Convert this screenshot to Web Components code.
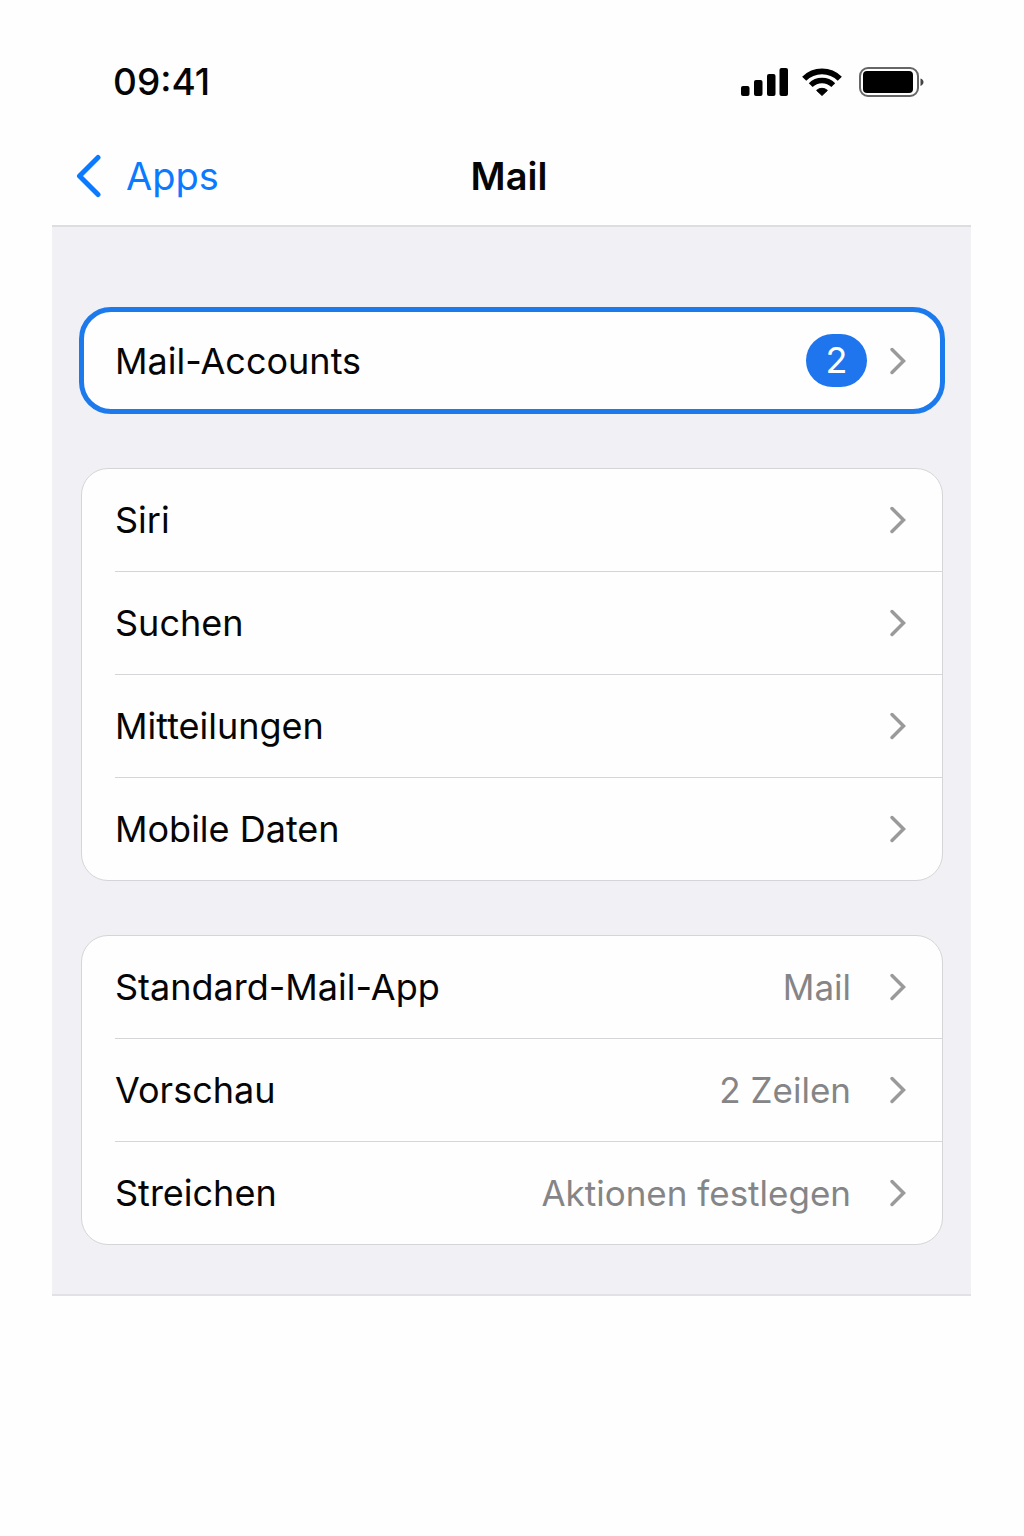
<!DOCTYPE html>
<html lang="de">
<head>
<meta charset="utf-8">
<meta name="viewport" content="width=device-width, initial-scale=1">
<title>Mail</title>
<style>
    body {
        margin: 0;
        background: #fefefe;
        color: #050505;
        font-family: Inter, "Liberation Sans", sans-serif;
    }
</style>
</head>
<body>
<settings-screen>
    <status-bar slot="status" time="09:41"></status-bar>
    <nav-header slot="header" back="Apps">Mail</nav-header>
    <settings-group highlighted>
        <settings-row badge="2">Mail-Accounts</settings-row>
    </settings-group>
    <settings-group>
        <settings-row>Siri</settings-row>
        <settings-row>Suchen</settings-row>
        <settings-row>Mitteilungen</settings-row>
        <settings-row>Mobile Daten</settings-row>
    </settings-group>
    <settings-group>
        <settings-row value="Mail">Standard-Mail-App</settings-row>
        <settings-row value="2 Zeilen">Vorschau</settings-row>
        <settings-row value="Aktionen festlegen">Streichen</settings-row>
    </settings-group>
</settings-screen>

<script>
class SettingsScreen extends HTMLElement {
    constructor() {
        super();
        this.attachShadow({mode: 'open'});
        this.shadowRoot.innerHTML = `
            <style>
                :host { display: block; padding: 52px 53px 0 52px; }
                main {
                    display: flex; flex-direction: column; gap: 54px;
                    padding: 82px 28px 49px 29px;
                    background: #f1f0f5;
                    border-top: 2px solid #dddde1; border-bottom: 2px solid #e2e2e6;
                }
            </style>
            <slot name="status"></slot>
            <slot name="header"></slot>
            <main><slot></slot></main>
        `;
    }
}

class StatusBar extends HTMLElement {
    connectedCallback() {
        this.attachShadow({mode: 'open'});
        this.shadowRoot.innerHTML = `
            <style>
                :host {
                    display: flex; align-items: center; justify-content: space-between;
                    height: 60px; padding: 0 47px 0 61px;
                }
                time { font-size: 37px; font-weight: 500; line-height: 48px; }
                .icons { display: flex; align-items: center; gap: 14px; }
                svg { display: block; }
            </style>
            <time>${this.getAttribute('time')}</time>
            <div class="icons">
                <svg width="47" height="30" viewBox="0 0 47 30" aria-hidden="true">
                    <rect x="0" y="19" width="8.500" height="10" rx="2"/>
                    <rect x="13" y="13" width="8.500" height="16" rx="2"/>
                    <rect x="26" y="7" width="8.500" height="22" rx="2"/>
                    <rect x="38.500" y="1" width="8.500" height="28" rx="2"/>
                </svg>
                <svg width="43" height="30" viewBox="0 0 43 30" fill="none" stroke="#000" aria-hidden="true">
                    <path d="M2.2 11.7a25.2 25.2 0 0 1 35.6 0" stroke-width="5.8"/>
                    <path d="M8.7 18.2a16 16 0 0 1 22.6 0" stroke-width="5.4"/>
                    <path d="M14.6 23.4a8 8 0 0 1 10.8 0L20 28.5z" fill="#000" stroke-width="1" stroke-linejoin="round"/>
                </svg>
                <svg width="65" height="30" viewBox="0 0 65 30" aria-hidden="true">
                    <rect x="1" y="1" width="58" height="28" rx="8" fill="none" stroke="#666" stroke-width="2"/>
                    <rect x="4" y="4" width="50" height="22" rx="4"/>
                    <path d="M61.500 11.500c4 1 4 6 0 7.500z" fill="#444"/>
                </svg>
            </div>
        `;
    }
}

class NavHeader extends HTMLElement {
    connectedCallback() {
        this.attachShadow({mode: 'open'});
        this.shadowRoot.innerHTML = `
            <style>
                :host {
                    display: grid; grid-template-columns: 1fr auto 1fr; align-items: center;
                    height: 113px; padding: 15px 28px 0 23px; box-sizing: border-box;
                }
                a {
                    justify-self: start; display: flex; align-items: center; gap: 24px;
                    color: #0a7aff; text-decoration: none; font-size: 38px; line-height: 48px;
                }
                h1 { margin: 0; font-size: 38px; font-weight: 600; line-height: 48px; }
                svg { display: block; }
            </style>
            <a href="#apps">
                <svg width="27" height="44" viewBox="0 0 27 44" fill="none" stroke="currentColor" stroke-width="5" stroke-linecap="round" stroke-linejoin="round" aria-hidden="true">
                    <path d="M23 3.500L4.500 22L23 40.500"/>
                </svg>
                ${this.getAttribute('back')}
            </a>
            <h1><slot></slot></h1>
        `;
    }
}

class SettingsGroup extends HTMLElement {
    constructor() {
        super();
        this.attachShadow({mode: 'open'});
        this.shadowRoot.innerHTML = `
            <style>
                :host {
                    display: block; overflow: hidden;
                    background: #fefefe; border: 1px solid #d5d5d8; border-radius: 27px;
                }
                :host([highlighted]) {
                    margin: -2px -2px 0; border: 5px solid #1c7aec; border-radius: 32px;
                    --row-height: 97px; --row-start: 31px; --row-end: 33px;
                }
                ::slotted(:not(:first-child)) { --divider: 1px solid #d5d5d8; }
            </style>
            <slot></slot>
        `;
    }
}

class SettingsRow extends HTMLElement {
    connectedCallback() {
        const badge = this.getAttribute('badge');
        const value = this.getAttribute('value');
        this.attachShadow({mode: 'open'});
        this.shadowRoot.innerHTML = `
            <style>
                :host { display: block; }
                button {
                    display: flex; width: 100%; padding: 0 0 0 var(--row-start, 33px);
                    border: 0; background: none; color: inherit; text-align: left;
                    font: inherit; font-size: 36px; line-height: 48px; cursor: pointer;
                }
                .content {
                    flex: 1; display: flex; align-items: center;
                    min-height: var(--row-height, 102px); padding-right: var(--row-end, 35px);
                    border-top: var(--divider, 0);
                }
                .label { flex: 1; }
                .value { margin-right: 38px; color: #858587; font-size: 35px; }
                .badge {
                    min-width: 61px; margin-right: 22px; border-radius: 27px;
                    background: #1f75ed; color: #fff; text-align: center; line-height: 53px;
                }
                svg { display: block; }
            </style>
            <button type="button">
                <span class="content">
                    <span class="label"><slot></slot></span>
                    ${value ? `<span class="value">${value}</span>` : ''}
                    ${badge ? `<span class="badge">${badge}</span>` : ''}
                    <svg width="18" height="28" viewBox="0 0 18 28" fill="none" stroke="#9a9a9b" stroke-width="3.500" stroke-linecap="round" aria-hidden="true">
                        <path d="M3 2.500L14.500 14L3 25.500"/>
                    </svg>
                </span>
            </button>
        `;
    }
}

customElements.define('settings-screen', SettingsScreen);
customElements.define('status-bar', StatusBar);
customElements.define('nav-header', NavHeader);
customElements.define('settings-group', SettingsGroup);
customElements.define('settings-row', SettingsRow);
</script>
</body>
</html>
